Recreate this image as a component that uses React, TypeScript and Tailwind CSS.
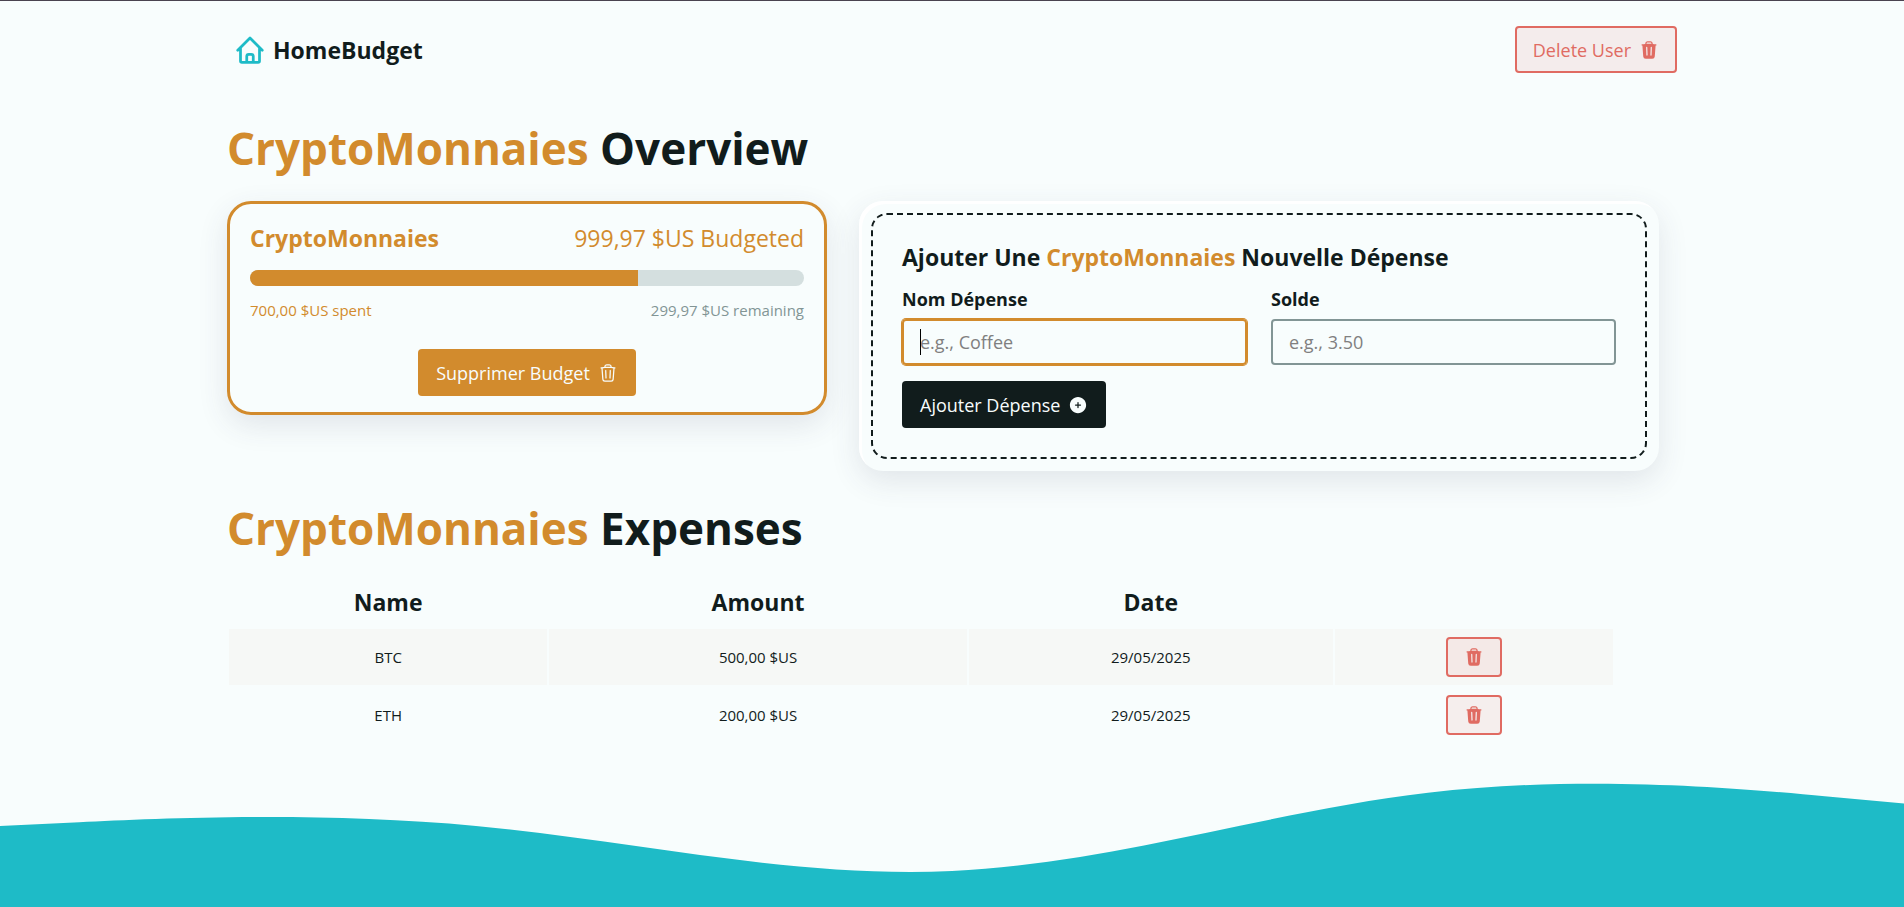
import { HiOutlineTrash, HiPlusCircle, HiTrash } from "react-icons/hi2";

const expenses = [
  { name: "BTC", amount: "500,00 $US", date: "29/05/2025" },
  { name: "ETH", amount: "200,00 $US", date: "29/05/2025" },
];

function HomeIcon() {
  return (
    <svg
      className="size-[30px] text-[#1ebbc7]"
      viewBox="0 0 24 24"
      fill="none"
      stroke="currentColor"
      strokeWidth="2.2"
      strokeLinecap="round"
      strokeLinejoin="round"
      aria-hidden="true"
    >
      <path d="M2.200 12.200 12 2.400l9.800 9.800M4.400 10.500v10.300c0 .6.5 1.100 1.100 1.100h13c.6 0 1.100-.5 1.100-1.100V10.500M9.400 21.500v-4.500c0-.9.700-1.600 1.600-1.600h2c.9 0 1.600.7 1.600 1.600v4.500" />
    </svg>
  );
}

function Header() {
  return (
    <header className="flex items-center justify-between py-[25px]">
      <a href="/" className="flex items-center gap-2 px-2 text-[23px] leading-8 font-bold">
        <HomeIcon />
        HomeBudget
      </a>
      <button
        type="button"
        className="flex h-[47px] items-center gap-2 rounded border-2 border-[#e06b62] bg-[#f4ecec] px-4 text-lg text-[#e06b62]"
      >
        Delete User
        <HiTrash className="size-5" />
      </button>
    </header>
  );
}

function BudgetCard() {
  return (
    <section className="rounded-3xl border-3 border-[#d28b2d] px-5 py-4 text-[#d28b2d] shadow-[0_10px_30px_rgba(60,60,90,0.12)]">
      <div className="flex items-center justify-between">
        <h3 className="text-[23px] leading-9 font-bold">CryptoMonnaies</h3>
        <p className="text-[23px] leading-9">999,97 $US Budgeted</p>
      </div>
      <div className="mt-[14px] h-4 overflow-hidden rounded-full bg-[#d4dfdf]">
        <div className="h-full w-[70%] bg-[#d28b2d]" />
      </div>
      <div className="mt-3 flex items-center justify-between text-[15px] leading-6">
        <span>700,00 $US spent</span>
        <span className="text-[#829595]">299,97 $US remaining</span>
      </div>
      <div className="mt-[27px] flex justify-center">
        <button
          type="button"
          className="flex h-[47px] items-center gap-2 rounded bg-[#d28b2d] px-[18px] text-lg text-[#f8fdfd]"
        >
          Supprimer Budget
          <HiOutlineTrash className="size-5" />
        </button>
      </div>
    </section>
  );
}

function ExpenseForm() {
  return (
    <section className="rounded-3xl p-3 shadow-[0_10px_30px_rgba(60,60,90,0.12),inset_3px_3px_0_#ffffff]">
      <form className="rounded-2xl border-2 border-dashed border-[#111c1c] px-[29px] pt-7 pb-[29px]">
        <h2 className="text-[23px] leading-7 font-bold">
          Ajouter Une <span className="text-[#d28b2d]">CryptoMonnaies</span> Nouvelle Dépense
        </h2>
        <div className="mt-3 grid gap-6 sm:grid-cols-2">
          <div>
            <label htmlFor="expense" className="block text-lg leading-8 font-bold">
              Nom Dépense
            </label>
            <div className="relative mt-1">
              <input
                id="expense"
                type="text"
                placeholder="e.g., Coffee"
                className="block h-[46px] w-full rounded border-2 border-[#d28b2d] px-4 text-lg shadow-[0_0_0_1px_#d28b2d] outline-none placeholder:text-[#808080]"
              />
              <span className="absolute top-[10px] left-[18px] h-[26px] w-px bg-black" />
            </div>
          </div>
          <div>
            <label htmlFor="amount" className="block text-lg leading-8 font-bold">
              Solde
            </label>
            <input
              id="amount"
              type="text"
              inputMode="decimal"
              placeholder="e.g., 3.50"
              className="mt-1 block h-[46px] w-full rounded border-2 border-[#829595] px-4 text-lg outline-none placeholder:text-[#808080]"
            />
          </div>
        </div>
        <button
          type="submit"
          className="mt-4 flex h-[47px] items-center gap-2 rounded bg-[#111c1c] px-[18px] text-lg text-[#f8fdfd]"
        >
          Ajouter Dépense
          <HiPlusCircle className="size-5" />
        </button>
      </form>
    </section>
  );
}

function ExpensesTable() {
  return (
    <table className="w-full max-w-[1388px] border-separate border-spacing-[2px] text-center">
      <colgroup>
        <col className="w-[23.1%]" />
        <col className="w-[30.3%]" />
        <col className="w-[26.4%]" />
        <col className="w-[20.2%]" />
      </colgroup>
      <thead>
        <tr className="text-[23px] leading-9">
          <th className="pt-[9px] pb-[7px]">Name</th>
          <th className="pt-[9px] pb-[7px]">Amount</th>
          <th className="pt-[9px] pb-[7px]">Date</th>
          <th className="pt-[9px] pb-[7px]" aria-label="Actions" />
        </tr>
      </thead>
      <tbody>
        {expenses.map((e) => (
          <tr key={e.name} className="text-[15px] odd:bg-[#f6f8f6]">
            <td className="p-2">{e.name}</td>
            <td className="p-2">{e.amount}</td>
            <td className="p-2">{e.date}</td>
            <td className="p-2">
              <button
                type="button"
                aria-label={`Delete ${e.name}`}
                className="mx-auto flex h-10 w-14 items-center justify-center rounded border-2 border-[#e06b62] bg-[#e06b62]/10 text-[#e06b62]"
              >
                <HiTrash className="size-5" />
              </button>
            </td>
          </tr>
        ))}
      </tbody>
    </table>
  );
}

function Wave() {
  return (
    <svg
      className="mt-auto block h-[150px] w-full shrink-0 text-[#1ebbc7]"
      viewBox="0 0 1904 150"
      preserveAspectRatio="none"
      fill="currentColor"
      aria-hidden="true"
    >
      <path d="M0 69L79.300 65.300C158.700 61.500 317.300 54.100 476 69C634.700 84 793.300 121.300 952 114C1110.700 106.600 1269.300 54.400 1428 35.800C1586.700 17.100 1745.300 31.800 1824.700 39.200L1904 46.600V150H0Z" />
    </svg>
  );
}

export default function App() {
  return (
    <div className="flex min-h-screen flex-col border-t border-[#4a4350] bg-[#f8fdfd] font-['Open_Sans','Noto_Sans',sans-serif] text-[#111c1c]">
      <div className="mx-auto w-full max-w-[1450px]">
        <Header />
        <main>
          <h1 className="mt-[21px] text-[44px] leading-[58px] font-bold">
            <span className="text-[#d28b2d]">CryptoMonnaies</span> Overview
          </h1>
          <div className="mt-6 grid items-start gap-8 lg:max-w-[1432px] lg:grid-cols-[3fr_4fr]">
            <BudgetCard />
            <ExpenseForm />
          </div>
          <h1 className="mt-7 text-[44px] leading-[58px] font-bold">
            <span className="text-[#d28b2d]">CryptoMonnaies</span> Expenses
          </h1>
          <div className="mt-4">
            <ExpensesTable />
          </div>
        </main>
      </div>
      <Wave />
    </div>
  );
}
